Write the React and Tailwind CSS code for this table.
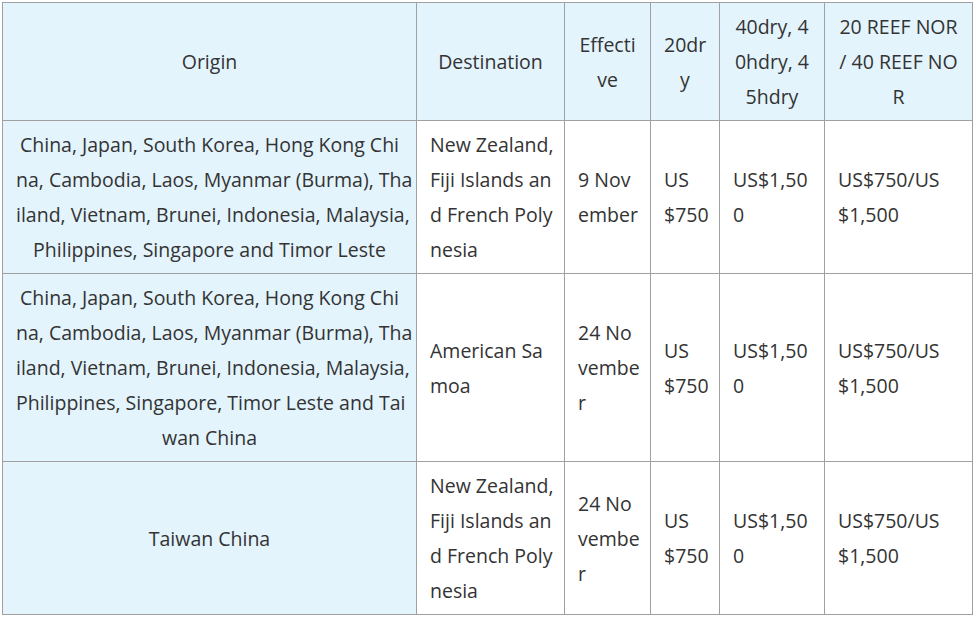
import React from 'react';

const header = [
  ['Origin'],
  ['Destination'],
  ['Effecti', 've'],
  ['20dr', 'y'],
  ['40dry, 4', '0hdry, 4', '5hdry'],
  ['20 REEF NOR', '/ 40 REEF NO', 'R'],
];

const rows = [
  [
    ['China, Japan, South Korea, Hong Kong Chi', 'na, Cambodia, Laos, Myanmar (Burma), Tha', 'iland, Vietnam, Brunei, Indonesia, Malaysia,', 'Philippines, Singapore and Timor Leste'],
    ['New Zealand,', 'Fiji Islands an', 'd French Poly', 'nesia'],
    ['9 Nov', 'ember'],
    ['US', '$750'],
    ['US$1,50', '0'],
    ['US$750/US', '$1,500'],
  ],
  [
    ['China, Japan, South Korea, Hong Kong Chi', 'na, Cambodia, Laos, Myanmar (Burma), Tha', 'iland, Vietnam, Brunei, Indonesia, Malaysia,', 'Philippines, Singapore, Timor Leste and Tai', 'wan China'],
    ['American Sa', 'moa'],
    ['24 No', 'vembe', 'r'],
    ['US', '$750'],
    ['US$1,50', '0'],
    ['US$750/US', '$1,500'],
  ],
  [
    ['Taiwan China'],
    ['New Zealand,', 'Fiji Islands an', 'd French Poly', 'nesia'],
    ['24 No', 'vembe', 'r'],
    ['US', '$750'],
    ['US$1,50', '0'],
    ['US$750/US', '$1,500'],
  ],
];

const Lines = ({ lines }) =>
  lines.map((l, i) => (
    <span key={i} className='block whitespace-nowrap'>{l}</span>
  ));

export default function App() {
  return (
    <div className='bg-white min-h-screen pt-[2px] pl-[2px] font-["Open_Sans",sans-serif] text-[19.5px] leading-[35px] text-[#333]'>
      <table className='table-fixed border-collapse w-[971px]'>
        <colgroup>
          <col className='w-[414px]' />
          <col className='w-[148px]' />
          <col className='w-[86px]' />
          <col className='w-[69px]' />
          <col className='w-[105px]' />
          <col className='w-[148px]' />
        </colgroup>
        <thead>
          <tr className='bg-[#e3f4fd]'>
            {header.map((h, i) => (
              <th key={i} className='border border-[#a0a0a0] px-[13px] py-[6px] font-normal text-center align-middle'>
                <Lines lines={h} />
              </th>
            ))}
          </tr>
        </thead>
        <tbody>
          {rows.map((r, ri) => (
            <tr key={ri}>
              {r.map((c, ci) => (
                <td
                  key={ci}
                  className={ci === 0
                    ? 'border border-[#a0a0a0] px-[13px] py-[6px] text-center align-middle bg-[#e3f4fd]'
                    : 'border border-[#a0a0a0] px-[13px] py-[6px] text-left align-middle'}
                >
                  <Lines lines={c} />
                </td>
              ))}
            </tr>
          ))}
        </tbody>
      </table>
    </div>
  );
}
